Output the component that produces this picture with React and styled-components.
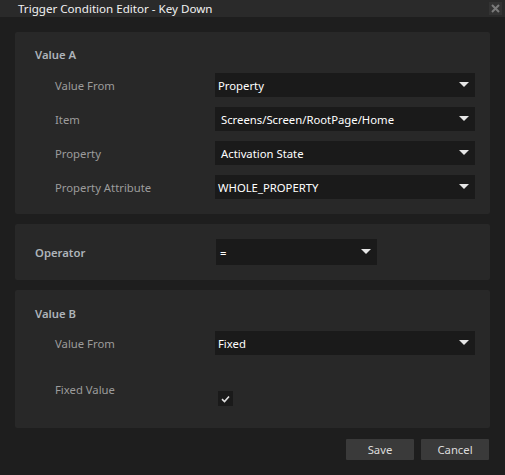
import React from "react";
import styled, { createGlobalStyle } from "styled-components";

const GlobalStyle = createGlobalStyle`
  html, body {
    margin: 0;
    padding: 0;
    background: #1e1e1e;
  }
  body {
    font-family: "Noto Sans", "Open Sans", sans-serif;
    font-size: 11.3px;
  }
`;

const Window = styled.div`
  width: 505px;
  height: 475px;
  background: #1e1e1e;
  display: flex;
  flex-direction: column;
  overflow: hidden;
`;

const TitleBar = styled.div`
  height: 17px;
  background: #2a2a2a;
  display: flex;
  align-items: center;
  justify-content: space-between;
  padding: 0 3px 0 18px;
  color: #f2f2f2;
  font-size: 11.6px;
`;

const CloseButton = styled.div`
  width: 13px;
  height: 13px;
  background: #333333;
  display: flex;
  align-items: center;
  justify-content: center;
`;

const Body = styled.div`
  display: flex;
  flex-direction: column;
  gap: 10px;
  padding: 15px 15px 0 15px;
`;

const Panel = styled.div`
  background: #282828;
  border-radius: 2px;
  padding: ${(p) => p.$pad || "12px 15px 14px 20px"};
  display: flex;
  flex-direction: column;
`;

const SectionTitle = styled.div`
  color: #aeb4ba;
  font-weight: 600;
  height: 17px;
  line-height: 17px;
  margin-bottom: ${(p) => p.$gap || "11px"};
`;

const Row = styled.div`
  display: grid;
  grid-template-columns: ${(p) => p.$col || "160px"} 1fr;
  align-items: ${(p) => p.$align || "center"};
  height: ${(p) => p.$h || "24px"};
  margin-bottom: ${(p) => p.$mb || "10px"};
  padding-left: ${(p) => p.$indent || "20px"};
`;

const Label = styled.div`
  color: ${(p) => (p.$bold ? "#aeb4ba" : "#9c9c9c")};
  font-weight: ${(p) => (p.$bold ? 600 : 400)};
  line-height: 17px;
`;

const Select = styled.div`
  height: ${(p) => p.$h || "24px"};
  width: ${(p) => p.$w || "260px"};
  background: #1a1a1a;
  color: #ffffff;
  display: flex;
  align-items: center;
  justify-content: space-between;
  padding: 0 3px 0 ${(p) => p.$pl || "3px"};
  box-sizing: border-box;
`;

const Arrow = styled.span`
  width: 0;
  height: 0;
  border-left: 5px solid transparent;
  border-right: 5px solid transparent;
  border-top: 5px solid #e6e6e6;
  margin-right: 3px;
  margin-top: -2px;
`;

const Check = styled.div`
  width: 15px;
  height: 15px;
  background: #1a1a1a;
  display: flex;
  align-items: center;
  justify-content: center;
  margin-left: 3px;
  margin-top: 10px;
`;

const Footer = styled.div`
  display: flex;
  justify-content: flex-end;
  gap: 7px;
  padding: 11px 16px 0 0;
`;

const Button = styled.div`
  width: 68px;
  height: 21px;
  background: #3a3a3a;
  border-radius: 1px;
  color: #dcdcdc;
  display: flex;
  align-items: center;
  justify-content: center;
`;

const Dropdown = ({ value, w, h, pl }) => (
  <Select $w={w} $h={h} $pl={pl}>
    <span>{value}</span>
    <Arrow />
  </Select>
);

export default function App() {
  return (
    <>
      <GlobalStyle />
      <Window>
        <TitleBar>
          <span>Trigger Condition Editor - Key Down</span>
          <CloseButton>
            <svg width="9" height="9" viewBox="0 0 9 9">
              <path d="M1 1 L8 8 M8 1 L1 8" stroke="#7a7a7a" strokeWidth="2" />
            </svg>
          </CloseButton>
        </TitleBar>
        <Body>
          <Panel $pad="14px 15px 15px 20px">
            <SectionTitle $gap="10px">Value A</SectionTitle>
            <Row>
              <Label>Value From</Label>
              <Dropdown value="Property" />
            </Row>
            <Row>
              <Label>Item</Label>
              <Dropdown value="Screens/Screen/RootPage/Home" pl="6px" />
            </Row>
            <Row>
              <Label>Property</Label>
              <Dropdown value="Activation State" pl="6px" />
            </Row>
            <Row $mb="0">
              <Label>Property Attribute</Label>
              <Dropdown value="WHOLE_PROPERTY" />
            </Row>
          </Panel>
          <Panel $pad="15px 15px 15px 20px">
            <Row $h="26px" $mb="0" $indent="0" $col="181px">
              <Label $bold>Operator</Label>
              <Dropdown value="=" w="161px" h="26px" pl="4px" />
            </Row>
          </Panel>
          <Panel $pad="15px 15px 21px 20px">
            <SectionTitle $gap="9px">Value B</SectionTitle>
            <Row $mb="26px">
              <Label>Value From</Label>
              <Dropdown value="Fixed" />
            </Row>
            <Row $h="26px" $mb="0" $align="start">
              <Label>Fixed Value</Label>
              <Check>
                <svg width="9" height="8" viewBox="0 0 9 8">
                  <path d="M1 4.2 L3.5 6.5 L8 1.5" fill="none" stroke="#e0e0e0" strokeWidth="1.6" />
                </svg>
              </Check>
            </Row>
          </Panel>
        </Body>
        <Footer>
          <Button>Save</Button>
          <Button>Cancel</Button>
        </Footer>
      </Window>
    </>
  );
}
